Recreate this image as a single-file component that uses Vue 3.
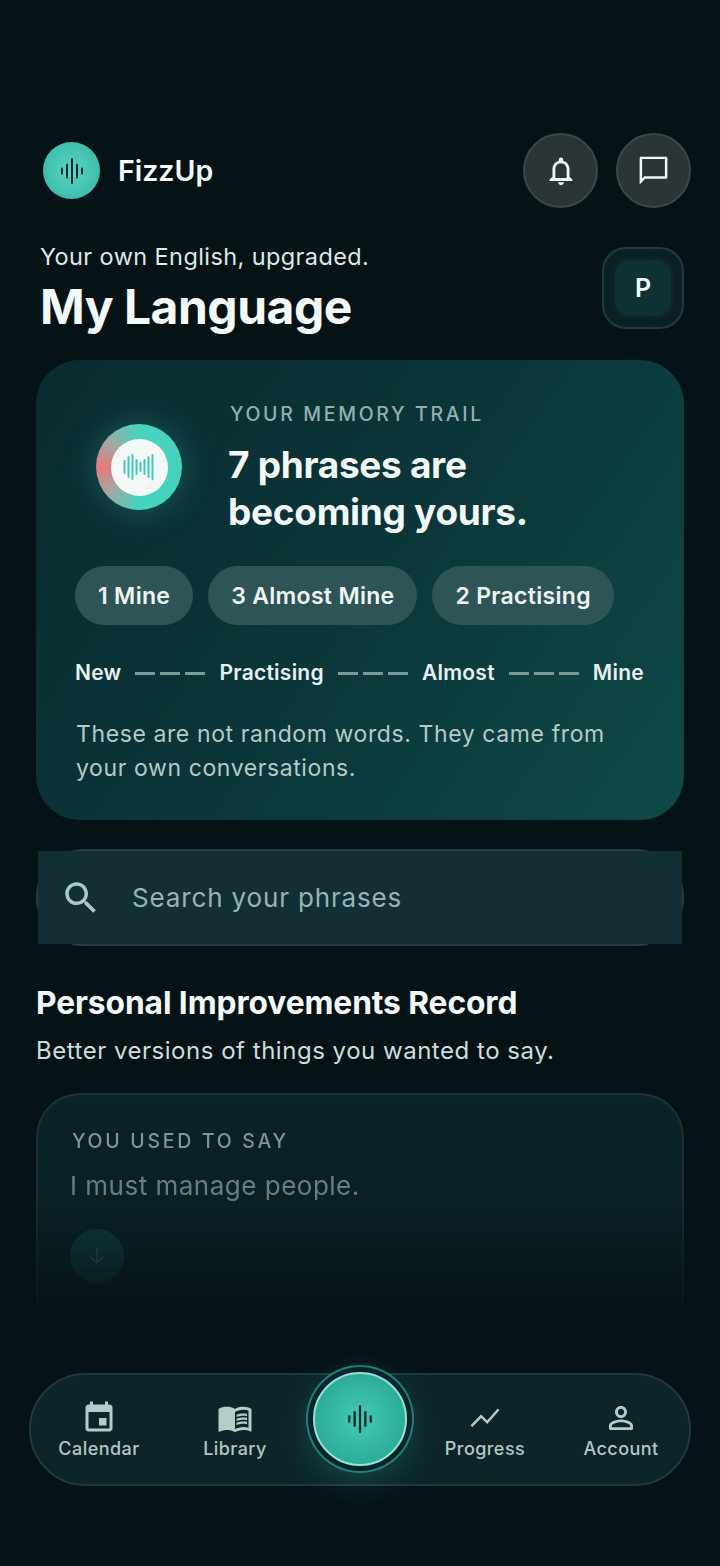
<script setup>
const chips = ["1 Mine", "3 Almost Mine", "2 Practising"];
const stages = ["New", "Practising", "Almost", "Mine"];
const wave = [
  { x: 2, h: 5 },
  { x: 7, h: 13 },
  { x: 12, h: 24 },
  { x: 17, h: 13 },
  { x: 22, h: 5 },
];
const trail = [
  { x: 1, h: 12 },
  { x: 5, h: 20 },
  { x: 9, h: 24 },
  { x: 13, h: 14 },
  { x: 17, h: 8 },
  { x: 21, h: 14 },
  { x: 25, h: 20 },
  { x: 29, h: 24 },
];
</script>

<template>
  <div class="page">
    <header class="top">
      <div class="brand">
        <div class="logo">
          <svg width="26" height="28" viewBox="0 0 24 28">
            <line v-for="b in wave" :key="b.x" :x1="b.x" :x2="b.x" :y1="14 - b.h / 2" :y2="14 + b.h / 2" stroke="#062b2b" stroke-width="2" stroke-linecap="round" />
          </svg>
        </div>
        <span class="brand-name">FizzUp</span>
      </div>
      <div class="top-btns">
        <button class="round">
          <svg width="34" height="34" viewBox="0 0 24 24" fill="#f1f6f5"><path d="M12 22c1.1 0 2-.9 2-2h-4c0 1.1.9 2 2 2zm6-6v-5c0-3.07-1.63-5.64-4.5-6.32V4c0-.83-.67-1.5-1.5-1.5s-1.5.67-1.5 1.5v.68C7.64 5.36 6 7.92 6 11v5l-2 2v1h16v-1l-2-2zm-2 1H8v-6c0-2.48 1.51-4.5 4-4.5s4 2.02 4 4.5v6z" /></svg>
        </button>
        <button class="round">
          <svg width="37" height="37" viewBox="0 0 24 24" fill="#f1f6f5"><path d="M20 3H4c-.6 0-1 .4-1 1v17l3.6-3.6H20c.6 0 1-.4 1-1V4c0-.6-.4-1-1-1zm-.6 12.8H6l-1.4 1.4V4.6h14.8v11.2z" /></svg>
        </button>
      </div>
    </header>

    <section class="intro">
      <div>
        <p class="tagline">Your own English, upgraded.</p>
        <h1>My Language</h1>
      </div>
      <div class="avatar"><span>P</span></div>
    </section>

    <section class="trail-card">
      <div class="trail-head">
        <div class="ring">
          <div class="ring-inner">
            <svg width="32" height="26" viewBox="0 0 31 26">
              <line v-for="b in trail" :key="b.x" :x1="b.x" :x2="b.x" :y1="13 - b.h / 2" :y2="13 + b.h / 2" stroke="#45c9b6" stroke-width="2" stroke-linecap="round" />
            </svg>
          </div>
        </div>
        <div>
          <p class="eyebrow">YOUR MEMORY TRAIL</p>
          <h2>7 phrases are<br />becoming yours.</h2>
        </div>
      </div>
      <div class="chips">
        <span v-for="c in chips" :key="c" class="chip">{{ c }}</span>
      </div>
      <div class="stages">
        <template v-for="(s, i) in stages" :key="s">
          <span>{{ s }}</span>
          <i v-if="i < stages.length - 1" class="dash"><b></b><b></b><b></b></i>
        </template>
      </div>
      <p class="trail-note">These are not random words. They came from your own conversations.</p>
    </section>

    <div class="search">
      <svg width="42" height="42" viewBox="0 0 24 24" fill="#a9cbc7"><path d="M15.5 14h-.79l-.28-.27C15.41 12.59 16 11.11 16 9.5 16 5.91 13.09 3 9.5 3S3 5.91 3 9.5 5.91 16 9.5 16c1.61 0 3.09-.59 4.23-1.57l.27.28v.79l5 4.99L20.49 19l-4.99-5zm-6 0C7.01 14 5 11.99 5 9.5S7.01 5 9.5 5 14 7.01 14 9.5 11.99 14 9.5 14z" /></svg>
      <span>Search your phrases</span>
    </div>

    <section class="record">
      <h3>Personal Improvements Record</h3>
      <p>Better versions of things you wanted to say.</p>
    </section>

    <section class="old-card">
      <p class="old-label">YOU USED TO SAY</p>
      <p class="old-text">I must manage people.</p>
      <div class="old-arrow">
        <svg width="24" height="24" viewBox="0 0 24 24" fill="none" stroke="#3c6a67" stroke-width="1.4" stroke-linecap="round" stroke-linejoin="round"><path d="M12 4v15M5.5 12.5 12 19l6.5-6.5" /></svg>
      </div>
    </section>

    <nav class="nav">
      <a class="nav-item">
        <svg width="36" height="36" viewBox="0 0 24 24" fill="#b4cdc9"><path d="M17 12h-5v5h5v-5zM16 1v2H8V1H6v2H5c-1.11 0-1.99.9-1.99 2L3 19c0 1.1.89 2 2 2h14c1.1 0 2-.9 2-2V5c0-1.1-.9-2-2-2h-1V1h-2zm3 18H5V8h14v11z" /></svg>
        <span>Calendar</span>
      </a>
      <a class="nav-item">
        <svg width="38" height="36" viewBox="0 0 24 24" fill="#b4cdc9"><path d="M21 5c-1.11-.35-2.33-.5-3.5-.5-1.95 0-4.05.4-5.5 1.5-1.45-1.1-3.55-1.5-5.5-1.5S2.45 4.9 1 6v14.65c0 .25.25.5.5.5.1 0 .15-.05.25-.05C3.1 20.45 5.05 20 6.5 20c1.95 0 4.05.4 5.5 1.5 1.35-.85 3.8-1.5 5.5-1.5 1.65 0 3.35.3 4.75 1.05.1.05.15.05.25.05.25 0 .5-.25.5-.5V6c-.6-.45-1.25-.75-2-1zm0 13.5c-1.1-.35-2.3-.5-3.5-.5-1.7 0-4.15.65-5.5 1.5V8c1.35-.85 3.8-1.5 5.5-1.5 1.2 0 2.4.15 3.5.5v11.5z" /><path d="M17.5 10.5c.88 0 1.73.09 2.5.26V9.24c-.79-.15-1.64-.24-2.5-.24-1.7 0-3.24.29-4.5.83v1.66c1.13-.64 2.7-.99 4.5-.99zM13 12.49v1.66c1.13-.64 2.7-.99 4.5-.99.88 0 1.73.09 2.5.26V11.9c-.79-.15-1.64-.24-2.5-.24-1.7 0-3.24.3-4.5.83zM17.5 14.33c-1.7 0-3.24.29-4.5.83v1.66c1.13-.64 2.7-.99 4.5-.99.88 0 1.73.09 2.5.26v-1.52c-.79-.16-1.64-.24-2.5-.24z" /></svg>
        <span>Library</span>
      </a>
      <div class="nav-gap"></div>
      <a class="nav-item">
        <svg width="36" height="36" viewBox="0 0 24 24" fill="#b4cdc9"><path d="M3.5 18l6-6 4 4L21.6 6.8l-1.1-1.1-7.1 8-4-4L2.4 16.9z" /></svg>
        <span>Progress</span>
      </a>
      <a class="nav-item">
        <svg width="36" height="36" viewBox="0 0 24 24" fill="#b4cdc9"><path d="M12 5.9c1.16 0 2.1.94 2.1 2.1s-.94 2.1-2.1 2.1S9.9 9.16 9.9 8s.94-2.1 2.1-2.1m0 9c2.97 0 6.1 1.46 6.1 2.1v1.1H5.9V17c0-.64 3.13-2.1 6.1-2.1M12 4C9.79 4 8 5.79 8 8s1.79 4 4 4 4-1.79 4-4-1.79-4-4-4zm0 9c-2.67 0-8 1.34-8 4v2c0 .55.45 1 1 1h14c.55 0 1-.45 1-1v-2c0-2.66-5.33-4-8-4z" /></svg>
        <span>Account</span>
      </a>
    </nav>

    <button class="mic">
      <svg width="30" height="30" viewBox="0 0 24 28">
        <line v-for="b in wave" :key="b.x" :x1="b.x" :x2="b.x" :y1="14 - b.h / 2" :y2="14 + b.h / 2" stroke="#062b2b" stroke-width="2.1" stroke-linecap="round" />
      </svg>
    </button>
  </div>
</template>

<style>
html,
body {
  margin: 0;
  background: #061316;
}
</style>

<style scoped>
* {
  box-sizing: border-box;
}
p,
h1,
h2,
h3 {
  margin: 0;
}
.page {
  position: relative;
  width: 720px;
  height: 1566px;
  overflow: hidden;
  padding: 133px 36px 0;
  background: #061316;
  color: #f3f8f8;
  font-family: Inter, "Liberation Sans", sans-serif;
}

/* 상단 */
.top {
  display: flex;
  justify-content: space-between;
  align-items: center;
  margin-right: -7px;
  padding-left: 7px;
}
.brand {
  display: flex;
  align-items: center;
  gap: 18px;
}
.logo {
  width: 57px;
  height: 57px;
  border-radius: 50%;
  display: flex;
  align-items: center;
  justify-content: center;
  background: radial-gradient(circle, #5fd4c2 0%, #2fb5a4 100%);
}
.brand-name {
  font-size: 28.5px;
  font-weight: 600;
}
.top-btns {
  display: flex;
  gap: 18px;
}
.round {
  width: 75px;
  height: 75px;
  padding: 0;
  border-radius: 50%;
  border: 2px solid #3b4748;
  background: #2b3536;
  display: flex;
  align-items: center;
  justify-content: center;
}
.intro {
  display: flex;
  justify-content: space-between;
  align-items: flex-start;
  margin-top: 36px;
  padding-left: 4px;
}
.tagline {
  font-size: 23.5px;
  line-height: 28px;
  letter-spacing: 0.4px;
  color: #dfe7e7;
  margin-top: -1px;
}
h1 {
  font-size: 48px;
  font-weight: 700;
  line-height: 56px;
  letter-spacing: -0.5px;
  margin-top: 8px;
}
.avatar {
  width: 82px;
  height: 82px;
  margin-top: 3px;
  border-radius: 24px;
  border: 2px solid #213a3d;
  background: #0d2125;
  display: flex;
  align-items: center;
  justify-content: center;
}
.avatar span {
  width: 56px;
  height: 56px;
  border-radius: 16px;
  background: #0e3232;
  box-shadow: 0 0 6px #0e3232;
  display: flex;
  align-items: center;
  justify-content: center;
  font-size: 25px;
  font-weight: 600;
}

/* 메모리 카드 */
.trail-card {
  height: 460px;
  margin-top: 25px;
  padding: 40px 40px 0 39px;
  border-radius: 44px;
  background: linear-gradient(125deg, #0a2b30 0%, #0b3639 50%, #0e4a48 100%);
}
.trail-head {
  display: flex;
  gap: 46px;
}
.ring {
  flex: none;
  width: 86px;
  height: 86px;
  margin: 24px 0 0 21px;
  border-radius: 50%;
  display: flex;
  align-items: center;
  justify-content: center;
  background: conic-gradient(from 270deg, #e37c7c 0deg, #a3a8a4 40deg, #4bd2bd 85deg, #43d3bd 270deg, #a3a8a4 320deg, #e37c7c 360deg);
  box-shadow: 0 0 34px rgba(72, 210, 190, 0.28);
}
.ring-inner {
  width: 57px;
  height: 57px;
  border-radius: 50%;
  background: #f3f7f6;
  display: flex;
  align-items: center;
  justify-content: center;
}
.eyebrow {
  margin-top: 2px;
  margin-left: 2px;
  font-size: 19.5px;
  line-height: 24px;
  font-weight: 500;
  letter-spacing: 2.65px;
  color: #95afae;
}
h2 {
  margin-top: 16px;
  font-size: 37px;
  line-height: 46.5px;
  font-weight: 700;
  letter-spacing: -0.3px;
}
.chips {
  display: flex;
  gap: 15px;
  margin-top: 31px;
}
.chip {
  height: 59px;
  padding: 0 23px;
  border-radius: 30px;
  background: #2f5455;
  display: flex;
  align-items: center;
  font-size: 23px;
  font-weight: 600;
  letter-spacing: 0.3px;
  color: #eef5f4;
}
.stages {
  display: flex;
  justify-content: space-between;
  align-items: center;
  margin-top: 34px;
  font-size: 21px;
  line-height: 28px;
  font-weight: 600;
  letter-spacing: 0.25px;
  color: #e6f0ef;
}
.dash {
  display: flex;
  gap: 5px;
}
.dash b {
  width: 20px;
  height: 3px;
  background: #7a9a98;
}
.trail-note {
  margin-top: 30px;
  margin-left: 1px;
  font-size: 23px;
  line-height: 34px;
  letter-spacing: 0.6px;
  color: #b5cbc8;
}

/* 검색 */
.search {
  position: relative;
  height: 97px;
  margin-top: 29px;
  padding-left: 22px;
  border-radius: 48px;
  border: 2px solid #223f44;
  background: #132f36;
  display: flex;
  align-items: center;
  gap: 30px;
  font-size: 26px;
  letter-spacing: 0.85px;
  color: #95b5b2;
}
.search::before {
  content: "";
  position: absolute;
  inset: 0;
  background: #132f36;
}
.search > * {
  position: relative;
}
.record {
  margin-top: 38px;
}
h3 {
  font-size: 31.75px;
  line-height: 38px;
  font-weight: 700;
  letter-spacing: -0.1px;
}
.record p {
  margin-top: 14px;
  font-size: 24px;
  line-height: 30px;
  letter-spacing: 0.52px;
  color: #cfdcdc;
}

/* 이전 표현 카드 (아래로 사라짐) */
.old-card {
  height: 240px;
  margin-top: 27px;
  padding: 34px 34px;
  border-radius: 44px 44px 0 0;
  border: 2px solid #1b3539;
  border-bottom: 0;
  background: #0b2429;
  -webkit-mask-image: linear-gradient(to bottom, #000 0%, rgba(0, 0, 0, 0.8) 45%, rgba(0, 0, 0, 0.4) 70%, transparent 95%);
  mask-image: linear-gradient(to bottom, #000 0%, rgba(0, 0, 0, 0.8) 45%, rgba(0, 0, 0, 0.4) 70%, transparent 95%);
}
.old-label {
  font-size: 19.5px;
  line-height: 24px;
  font-weight: 500;
  letter-spacing: 2.7px;
  color: #8ba3a3;
}
.old-text {
  margin-top: 17px;
  margin-left: -2px;
  font-size: 26px;
  line-height: 32px;
  letter-spacing: 0.5px;
  color: #7d9696;
}
.old-arrow {
  width: 54px;
  height: 54px;
  margin-top: 27px;
  margin-left: -2px;
  border-radius: 50%;
  background: #134246;
  display: flex;
  align-items: center;
  justify-content: center;
}

/* 하단 내비 */
.nav {
  position: absolute;
  left: 29px;
  top: 1373px;
  width: 662px;
  height: 113px;
  border-radius: 57px;
  border: 2px solid #203a3b;
  background: #0d2429;
  display: flex;
  align-items: center;
}
.nav-item {
  width: 136px;
  display: flex;
  flex-direction: column;
  align-items: center;
  gap: 1px;
  font-size: 18px;
  font-weight: 500;
  letter-spacing: 0.45px;
  color: #b0c9c6;
  margin-top: 2px;
}
.nav-item span {
  line-height: 24px;
}
.nav-gap {
  flex: 1;
}
.mic {
  position: absolute;
  left: 313px;
  top: 1372px;
  width: 94px;
  height: 94px;
  padding: 0;
  border-radius: 50%;
  border: 2px solid #93e2d2;
  background: radial-gradient(circle, #45c9b6 0%, #23a08f 100%);
  display: flex;
  align-items: center;
  justify-content: center;
  box-shadow: 0 0 0 5px #0b2429, 0 0 0 7px #1f7f78, 0 10px 40px rgba(50, 200, 180, 0.3);
}
</style>
